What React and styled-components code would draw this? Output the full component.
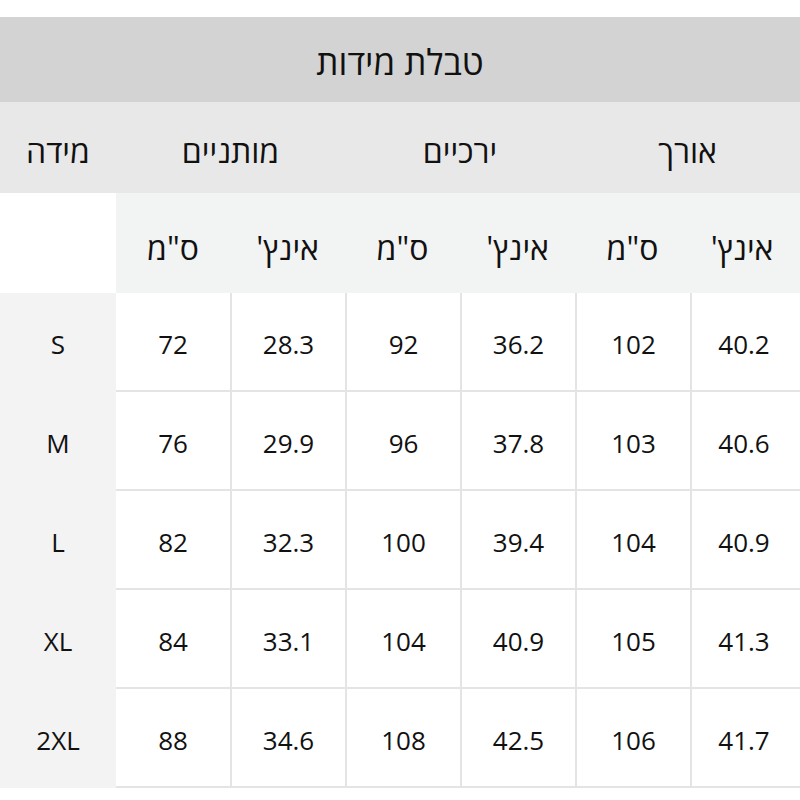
import React from 'react'
import styled, { createGlobalStyle } from 'styled-components'

const GlobalStyle = createGlobalStyle`
  body {
    margin: 0;
    background: #fff;
    font-family: "Open Sans", "DejaVu Sans", sans-serif;
    color: #111;
  }
`

// widths from left to right: size column, then the six measure columns
const COLS = '116px 114px 115px 115px 115px 115px 110px'

const Wrapper = styled.div`
  width: 800px;
  padding-top: 17px;
  direction: rtl;
`

const TitleBar = styled.div`
  height: 85px;
  background: #d3d3d3;
  display: flex;
  align-items: center;
  justify-content: center;
  font-size: 35px;
  padding-top: 4px;
  box-sizing: border-box;
`

const Row = styled.div`
  display: grid;
  direction: ltr;
  grid-template-columns: ${COLS};
  height: ${p => p.h}px;
  background: ${p => p.bg || '#fff'};
`

const GroupHead = styled.div`
  grid-column: span ${p => p.span || 1};
  display: flex;
  align-items: center;
  justify-content: center;
  direction: rtl;
  font-size: 32px;
  padding-top: 6px;
`

const UnitHead = styled.div`
  display: flex;
  align-items: center;
  justify-content: center;
  direction: rtl;
  font-size: 32px;
  padding-top: 8px;
  padding-right: ${p => (p.last ? '6px' : '0')};
  background: ${p => (p.blank ? '#fff' : 'transparent')};
`

const SizeCell = styled.div`
  display: flex;
  align-items: center;
  justify-content: center;
  font-size: 26px;
  background: #f3f3f3;
  padding-top: 2px;
`

const Cell = styled.div`
  display: flex;
  align-items: center;
  justify-content: center;
  font-size: 26px;
  background: #fff;
  padding-top: 4px;
  border-bottom: 2px solid #e4e4e4;
  border-left: ${p => (p.first ? 'none' : '2px solid #e4e4e4')};
  padding-right: ${p => (p.last ? '4px' : '0')};
`

const rows = [
  ['S', '72', '28.3', '92', '36.2', '102', '40.2'],
  ['M', '76', '29.9', '96', '37.8', '103', '40.6'],
  ['L', '82', '32.3', '100', '39.4', '104', '40.9'],
  ['XL', '84', '33.1', '104', '40.9', '105', '41.3'],
  ['2XL', '88', '34.6', '108', '42.5', '106', '41.7'],
]

export default function App() {
  return (
    <Wrapper>
      <GlobalStyle />
      <TitleBar>טבלת מידות</TitleBar>
      <Row h={91} bg="#e8e8e8">
        <GroupHead>מידה</GroupHead>
        <GroupHead span={2}>מותניים</GroupHead>
        <GroupHead span={2}>ירכיים</GroupHead>
        <GroupHead span={2}>אורך</GroupHead>
      </Row>
      <Row h={100} bg="#f2f3f3">
        <UnitHead blank />
        <UnitHead>ס"מ</UnitHead>
        <UnitHead>אינץ'</UnitHead>
        <UnitHead>ס"מ</UnitHead>
        <UnitHead>אינץ'</UnitHead>
        <UnitHead>ס"מ</UnitHead>
        <UnitHead last>אינץ'</UnitHead>
      </Row>
      {rows.map(r => (
        <Row key={r[0]} h={99}>
          <SizeCell>{r[0]}</SizeCell>
          {r.slice(1).map((v, i) => (
            <Cell key={i} first={i === 0} last={i === 5}>{v}</Cell>
          ))}
        </Row>
      ))}
    </Wrapper>
  )
}
